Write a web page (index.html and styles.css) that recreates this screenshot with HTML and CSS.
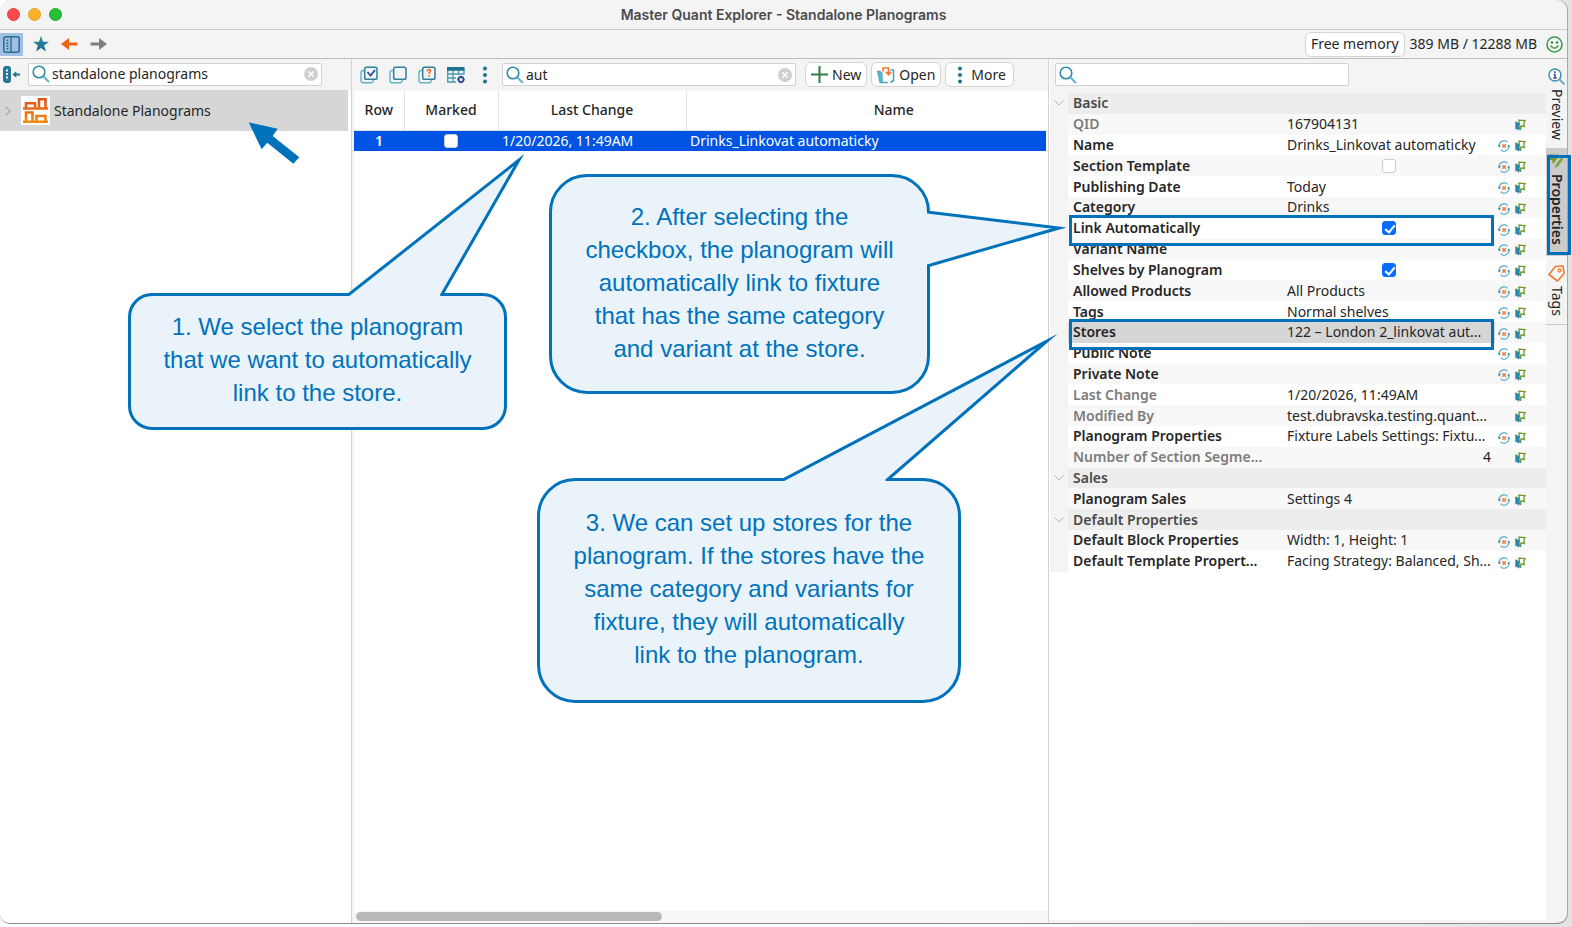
FILE: index.html
```
<!DOCTYPE html>
<html lang="en">
<head>
  <meta charset="UTF-8" />
  <meta name="viewport" content="width=device-width, initial-scale=1" />
  <title>Master Quant Explorer - Standalone Planograms</title>
  <link rel="stylesheet" href="styles.css">
</head>
<body>
  <!-- ICONS -->
  <svg class="icon-defs" aria-hidden="true">
    <defs>
      <linearGradient id="teal" x1="0" y1="0" x2="0" y2="1">
        <stop offset="0" stop-color="#2f86a3" />
        <stop offset="1" stop-color="#1d6c8c" />
      </linearGradient>
      <linearGradient id="orange" x1="0" y1="0" x2="0" y2="1">
        <stop offset="0" stop-color="#e2521b" />
        <stop offset="1" stop-color="#f28a10" />
      </linearGradient>
    </defs>
    <symbol id="i-search" viewBox="0 0 18 18">
      <circle cx="7" cy="7" r="5.8" fill="none" stroke="#2e8aa8" stroke-width="1.6" />
      <path d="M11.2 11.2 17 17" stroke="#63b3ca" stroke-width="2" />
    </symbol>
    <symbol id="i-clear" viewBox="0 0 14 14">
      <circle cx="7" cy="7" r="7" fill="#cfcfcf" />
      <path d="M4.3 4.3l5.4 5.4M9.7 4.3L4.3 9.7" stroke="#fff" stroke-width="1.4" />
    </symbol>
    <symbol id="i-dots" viewBox="0 0 6 18">
      <circle cx="3" cy="2.5" r="2" fill="#1f7391" />
      <circle cx="3" cy="9" r="2" fill="#1f7391" />
      <circle cx="3" cy="15.5" r="2" fill="#1f7391" />
    </symbol>
    <symbol id="i-sheets" viewBox="0 0 18 18">
      <path d="M5 4.5H3.2Q1 4.5 1 6.7V14.5Q1 16.8 3.2 16.8H11Q13.2 16.8 13.2 14.5V13" fill="none" stroke="#63b3ca" stroke-width="1.4" />
      <rect x="4.7" y="1.2" width="12.3" height="12" rx="1.8" fill="#f4f4f4" stroke="#2e7f9c" stroke-width="1.5" />
    </symbol>
    <symbol id="i-sync" viewBox="0 0 12 12">
      <path d="M9.6 2.4A4.9 4.9 0 0 0 1.2 6.6M2.6 9.8A4.9 4.9 0 0 0 10.9 5.6" fill="none" stroke="#6cb5cc" stroke-width="1.3" />
      <path d="M0 5l1.3 2.6L3 5.4zM12 6.8L10.7 4.4 9.2 6.6z" fill="#2e8aa8" />
      <path d="M4.3 4.2l3.6 3.6M7.9 4.2L4.3 7.8" stroke="#ef7a2e" stroke-width="1.3" />
    </symbol>
    <symbol id="i-pin" viewBox="0 0 11 12">
      <path d="M.3 2.3L4 4v4.2l2.2.3v2.8L4 10.3l-.6 1.5-1.6-2-1.5.6z" fill="#2b87a6" />
      <path d="M3.8 1.1l6.3.5-1.3 2.3.6 3.6-2.2-.7-2 2-.6-3.4z" fill="#fff" stroke="#6f9a2e" stroke-width="1.3" />
    </symbol>
    <symbol id="i-fold" viewBox="0 0 10 6">
      <path d="M.5.5L5 5 9.5.5" fill="none" stroke="#b4b4b4" />
    </symbol>
  </svg>

  <div class="window">
    <header class="title-bar">
      <div class="lights">
        <button class="light red" aria-label="Close"></button>
        <button class="light yellow" aria-label="Minimize"></button>
        <button class="light green" aria-label="Zoom"></button>
      </div>
      <h1>Master Quant Explorer - Standalone Planograms</h1>
    </header>

    <div class="main-toolbar">
      <button class="tool active" aria-label="Toggle side panel">
        <svg width="17" height="17" viewBox="0 0 17 17"><rect x=".8" y=".8" width="15.4" height="15.4" rx="2" fill="none" stroke="#23708f" stroke-width="1.5" /><path d="M8 1v15" stroke="#23708f" stroke-width="1.4" /><path d="M4.4 3.5v10" stroke="#23708f" stroke-width="1.8" stroke-dasharray="1.6 1.2" /></svg>
      </button>
      <button class="tool" aria-label="Favourites">
        <svg width="16" height="16" viewBox="0 0 16 16"><path d="M8 0l2 5.8h6l-4.9 3.6L13 15.6 8 12l-5 3.6 1.9-6.2L0 5.8h6z" fill="url(#teal)" /></svg>
      </button>
      <button class="tool" aria-label="Back">
        <svg width="17" height="12" viewBox="0 0 17 12"><path d="M0 6L8 0v4.5h8.5v3H8V12z" fill="#ea6414" /></svg>
      </button>
      <button class="tool" aria-label="Forward">
        <svg width="17" height="12" viewBox="0 0 17 12"><path d="M17 6L9 0v4.5H.5v3H9V12z" fill="#808080" /></svg>
      </button>
      <div class="memory">
        <button class="btn">Free memory</button>
        <span>389 MB / 12288 MB</span>
        <svg width="17" height="17" viewBox="0 0 17 17"><circle cx="8.5" cy="8.5" r="7.5" fill="none" stroke="#3f9a4c" stroke-width="1.6" /><circle cx="6" cy="6.5" r="1.2" fill="#2f8a45" /><circle cx="11" cy="6.5" r="1.2" fill="#2f8a45" /><path d="M4.5 9.5Q8.5 15 12.5 9.5" fill="none" stroke="#4fa04a" stroke-width="1.5" /></svg>
      </div>
    </div>

    <main class="panels">
      <!-- TREE -->
      <section class="tree-panel">
        <div class="panel-bar">
          <button class="collapse" aria-label="Collapse tree">
            <svg width="17" height="17" viewBox="0 0 17 17"><rect x=".8" y=".8" width="6.4" height="15.4" rx="2" fill="#2a7d9b" stroke="#1f6d8b" stroke-width="1.4" /><path d="M4 3.5V14" stroke="#fff" stroke-width="1.8" stroke-dasharray="2 1.5" /><path d="M9.5 8.5L13.3 5.3v2.2H17v2h-3.7v2.2z" fill="#1f7391" /></svg>
          </button>
          <label class="search">
            <svg width="18" height="18"><use href="#i-search" /></svg>
            <input type="text" aria-label="Search tree" value="standalone planograms">
            <svg width="14" height="14"><use href="#i-clear" /></svg>
          </label>
        </div>
        <a class="tree-row" href="#">
          <svg class="chevron" width="6" height="10" viewBox="0 0 6 10"><path d="M.5.5L5 5 .5 9.5" fill="none" stroke="#a8a8a8" stroke-width="1.2" /></svg>
          <span class="tree-icon">
            <svg width="25" height="25" viewBox="0 0 25 25" fill="none" stroke="url(#orange)" stroke-width="2.6"><path d="M0 10.5H25M3 10.5V5.3H12V10.5M16 10.5V1.3H22.5V10.5M0 23.7H25M3 23.7V14.5H9.5V23.7M13.5 23.7V18H22.5V23.7" /></svg>
          </span>
          Standalone Planograms
        </a>
      </section>

      <!-- LIST -->
      <section class="list-panel">
        <div class="panel-bar">
          <button class="tool" aria-label="Mark all">
            <svg width="18" height="18"><use href="#i-sheets" /><path d="M7.5 6l3 3.5L15 4" fill="none" stroke="#2c4f9c" stroke-width="1.8" /></svg>
          </button>
          <button class="tool" aria-label="Unmark all">
            <svg width="18" height="18"><use href="#i-sheets" /></svg>
          </button>
          <button class="tool" aria-label="Show marked">
            <svg width="18" height="18"><use href="#i-sheets" /><path d="M9.2 5.3Q9.5 3.5 11 3.6 13 3.9 12.3 5.7 11 6.5 11 8M11 9.3V11" fill="none" stroke="#ea7430" stroke-width="1.6" /></svg>
          </button>
          <button class="tool" aria-label="Table settings">
            <svg width="18" height="18" viewBox="0 0 18 18"><path d="M.7 2v14H9M.7 8H17M.7 12H9M6 4v12M11.5 4v5M17 3v5.5" fill="none" stroke="#4b9ab4" stroke-width="1.3" /><path d="M0 1h17.5v3.8H0z" fill="#1f7391" /><circle cx="14" cy="13.5" r="2.5" fill="#f4f4f4" stroke="#2c4f8c" stroke-width="1.8" /><path d="M14 9.8v1M14 16.2v1M10.3 13.5h1M16.7 13.5h1" stroke="#2c4f8c" stroke-width="1.6" /></svg>
          </button>
          <button class="tool" aria-label="More tools">
            <svg width="6" height="18"><use href="#i-dots" /></svg>
          </button>
          <label class="search">
            <svg width="18" height="18"><use href="#i-search" /></svg>
            <input type="text" aria-label="Search list" value="aut">
            <svg width="14" height="14"><use href="#i-clear" /></svg>
          </label>
          <div class="actions">
            <button class="btn">
              <svg width="17" height="17" viewBox="0 0 17 17"><path d="M8.5 0v17M0 8.5h17" stroke="#2f7d43" stroke-width="2" /></svg>
              New
            </button>
            <button class="btn">
              <svg width="18" height="18" viewBox="0 0 18 18"><path d="M11 16.5H3.3L.8 5.5h3M13.5 4H16.5V14.5L13.5 16.5" fill="none" stroke="#4ea4be" stroke-width="1.6" /><path d="M1.5 5.5l4 .5.5 10.5H3.5z" fill="#5fb0c8" /><path d="M6 5.5V2h5.5v6M8.8 5.8l2.7 3 2.7-3" fill="none" stroke="#ef7a2e" stroke-width="1.7" /></svg>
              Open
            </button>
            <button class="btn more">
              <svg width="6" height="18"><use href="#i-dots" /></svg>
              More
            </button>
          </div>
        </div>
        <div class="list-view">
          <table class="list">
            <thead>
              <tr><th class="c-row">Row</th><th class="c-marked">Marked</th><th class="c-change">Last Change</th><th>Name</th></tr>
            </thead>
            <tbody>
              <tr><td class="num">1</td><td class="mark"><input type="checkbox" aria-label="Marked"></td><td>1/20/2026, 11:49AM</td><td>Drinks_Linkovat automaticky</td></tr>
            </tbody>
          </table>
        </div>
        <div class="scroll-track"><div class="scroll-thumb"></div></div>
      </section>

      <!-- PROPERTIES -->
      <section class="props-panel">
        <div class="props">
          <div class="panel-bar">
            <label class="search">
              <svg width="18" height="18"><use href="#i-search" /></svg>
              <input type="text" aria-label="Search properties">
            </label>
          </div>
          <table class="props-table">
            <colgroup><col class="p-gutter"><col class="p-name"><col><col class="p-icons"></colgroup>
            <tbody>
              <tr class="group"><td><svg width="10" height="6"><use href="#i-fold" /></svg></td><th colspan="3">Basic</th></tr>
              <tr class="locked"><td></td><th>QID</th><td>167904131</td><td><svg width="11" height="12"><use href="#i-pin" /></svg></td></tr>
              <tr><td></td><th>Name</th><td>Drinks_Linkovat automaticky</td><td><svg width="12" height="12"><use href="#i-sync" /></svg><svg width="11" height="12"><use href="#i-pin" /></svg></td></tr>
              <tr><td></td><th>Section Template</th><td><input type="checkbox" aria-label="Section Template"></td><td><svg width="12" height="12"><use href="#i-sync" /></svg><svg width="11" height="12"><use href="#i-pin" /></svg></td></tr>
              <tr><td></td><th>Publishing Date</th><td>Today</td><td><svg width="12" height="12"><use href="#i-sync" /></svg><svg width="11" height="12"><use href="#i-pin" /></svg></td></tr>
              <tr><td></td><th>Category</th><td>Drinks</td><td><svg width="12" height="12"><use href="#i-sync" /></svg><svg width="11" height="12"><use href="#i-pin" /></svg></td></tr>
              <tr class="framed"><td></td><th>Link Automatically</th><td><input type="checkbox" aria-label="Link Automatically" checked></td><td><svg width="12" height="12"><use href="#i-sync" /></svg><svg width="11" height="12"><use href="#i-pin" /></svg></td></tr>
              <tr><td></td><th>Variant Name</th><td></td><td><svg width="12" height="12"><use href="#i-sync" /></svg><svg width="11" height="12"><use href="#i-pin" /></svg></td></tr>
              <tr><td></td><th>Shelves by Planogram</th><td><input type="checkbox" aria-label="Shelves by Planogram" checked></td><td><svg width="12" height="12"><use href="#i-sync" /></svg><svg width="11" height="12"><use href="#i-pin" /></svg></td></tr>
              <tr><td></td><th>Allowed Products</th><td>All Products</td><td><svg width="12" height="12"><use href="#i-sync" /></svg><svg width="11" height="12"><use href="#i-pin" /></svg></td></tr>
              <tr><td></td><th>Tags</th><td>Normal shelves</td><td><svg width="12" height="12"><use href="#i-sync" /></svg><svg width="11" height="12"><use href="#i-pin" /></svg></td></tr>
              <tr class="framed selected"><td></td><th>Stores</th><td>122 – London 2_linkovat aut...</td><td><svg width="12" height="12"><use href="#i-sync" /></svg><svg width="11" height="12"><use href="#i-pin" /></svg></td></tr>
              <tr><td></td><th>Public Note</th><td></td><td><svg width="12" height="12"><use href="#i-sync" /></svg><svg width="11" height="12"><use href="#i-pin" /></svg></td></tr>
              <tr><td></td><th>Private Note</th><td></td><td><svg width="12" height="12"><use href="#i-sync" /></svg><svg width="11" height="12"><use href="#i-pin" /></svg></td></tr>
              <tr class="locked"><td></td><th>Last Change</th><td>1/20/2026, 11:49AM</td><td><svg width="11" height="12"><use href="#i-pin" /></svg></td></tr>
              <tr class="locked"><td></td><th>Modified By</th><td>test.dubravska.testing.quant...</td><td><svg width="11" height="12"><use href="#i-pin" /></svg></td></tr>
              <tr><td></td><th>Planogram Properties</th><td>Fixture Labels Settings: Fixtu...</td><td><svg width="12" height="12"><use href="#i-sync" /></svg><svg width="11" height="12"><use href="#i-pin" /></svg></td></tr>
              <tr class="locked"><td></td><th>Number of Section Segme...</th><td class="right">4</td><td><svg width="11" height="12"><use href="#i-pin" /></svg></td></tr>
              <tr class="group"><td><svg width="10" height="6"><use href="#i-fold" /></svg></td><th colspan="3">Sales</th></tr>
              <tr><td></td><th>Planogram Sales</th><td>Settings 4</td><td><svg width="12" height="12"><use href="#i-sync" /></svg><svg width="11" height="12"><use href="#i-pin" /></svg></td></tr>
              <tr class="group"><td><svg width="10" height="6"><use href="#i-fold" /></svg></td><th colspan="3">Default Properties</th></tr>
              <tr><td></td><th>Default Block Properties</th><td>Width: 1, Height: 1</td><td><svg width="12" height="12"><use href="#i-sync" /></svg><svg width="11" height="12"><use href="#i-pin" /></svg></td></tr>
              <tr><td></td><th>Default Template Propert...</th><td>Facing Strategy: Balanced, Sh...</td><td><svg width="12" height="12"><use href="#i-sync" /></svg><svg width="11" height="12"><use href="#i-pin" /></svg></td></tr>
            </tbody>
          </table>
        </div>
        <nav class="side-tabs">
          <button class="side-tab">
            <svg width="17" height="17" viewBox="0 0 17 17"><circle cx="7" cy="7" r="6" fill="#fff" stroke="#3a93b0" stroke-width="1.5" /><path d="M11.5 11.5L16.5 16.5" stroke="#63b3ca" stroke-width="2" /><path d="M7 3.3V5M5.500 6.500H7V10M5.300 10h3.500" fill="none" stroke="#4a3c96" stroke-width="1.5" /></svg>
            Preview
          </button>
          <button class="side-tab current">
            <svg width="17" height="17" viewBox="0 0 17 17"><path d="M0 1.500h10v3L5 11l-1-4H0z" fill="#6f9a2e" /><path d="M7 12l6-8 3 2-6 8-3.500 1.500z" fill="#7fa83a" stroke="#cbcbcb" /></svg>
            Properties
          </button>
          <button class="side-tab">
            <svg width="17" height="17" viewBox="0 0 17 17"><path d="M1 9.500L7.500 1.500 15 1 16 8.500 9.500 16z" fill="#fff" stroke="#ef7a2e" stroke-width="1.6" stroke-linejoin="round" /><circle cx="11.500" cy="5.500" r="1.5" fill="none" stroke="#ef7a2e" stroke-width="1.3" /></svg>
            Tags
          </button>
        </nav>
      </section>
    </main>

    <!-- GUIDE NOTES -->
    <svg class="pointer" viewBox="0 0 156 129"><path d="M2 1L89 20 74 42 154 106 136 125 58 62 41 82z" fill="#0072bc" /></svg>
    <div class="note note-select">
      <p>1. We select the planogram that we want to automatically link to the store.</p>
      <svg class="tail" viewBox="0 0 180 145"><path d="M2 145L174 9 96 145" /></svg>
    </div>
    <div class="note note-link">
      <p>2. After selecting the checkbox, the planogram will automatically link to fixture that has the same category and variant at the store.</p>
      <svg class="tail" viewBox="0 0 145 70"><path d="M0 10L132 26 0 64" /></svg>
    </div>
    <div class="note note-stores">
      <p>3. We can set up stores for the planogram. If the stores have the same category and variants for fixture, they will automatically<br>link to the planogram.</p>
      <svg class="tail" viewBox="0 0 280 150"><path d="M0 150L266 10 105 150" /></svg>
    </div>
  </div>
</body>
</html>
```
FILE: styles.css
```
* {
  box-sizing: border-box;
  margin: 0;
  padding: 0;
}

body {
  min-height: 100vh;
  padding: 0 5px 3px 0;
  display: flex;
  background: linear-gradient(to right, #fff 60%, #e2e2e2 100%);
  color: #262626;
  font-family: "Noto Sans", "Lucida Grande", sans-serif;
  font-size: 14px;
  line-height: 20px;
}

button, input {
  font: inherit;
  color: inherit;
  border: 0;
  background: none;
}

.icon-defs {
  position: absolute;
  width: 0;
  height: 0;
}

.window {
  position: relative;
  flex: 1;
  display: flex;
  flex-direction: column;
  background: #f4f4f4;
  border-radius: 10px;
  border-bottom: 1px solid #8c8c8c;
  box-shadow: 1px 0 0 #a8a8a8;
}

/* title bar */
.title-bar {
  height: 30px;
  display: flex;
  align-items: center;
  border-bottom: 1px solid #cbcbcb;
}

.lights {
  width: 70px;
  padding-left: 7px;
  display: flex;
  gap: 8px;
}

.light {
  width: 13px;
  height: 13px;
  border-radius: 50%;
}

.red { background: #fc4a48; border: 1px solid #e0413e; }
.yellow { background: #fdb02a; border: 1px solid #e09d24; }
.green { background: #24c138; border: 1px solid #1fa42f; }

.title-bar h1 {
  flex: 1;
  padding-right: 70px;
  text-align: center;
  font-family: Inter, sans-serif;
  font-size: 14px;
  font-weight: 600;
  color: #4b4b4b;
}

/* toolbars */
.main-toolbar {
  height: 29px;
  display: flex;
  align-items: center;
  gap: 6px;
  padding-right: 4px;
  border-bottom: 1px solid #bdbdbd;
}

.tool {
  width: 23px;
  height: 23px;
  display: flex;
  align-items: center;
  justify-content: center;
}

.tool.active {
  background: #a0bfe2;
}

.memory {
  margin-left: auto;
  display: flex;
  align-items: center;
  gap: 5px;
}

.memory svg {
  margin-left: 4px;
}

.btn {
  height: 25px;
  padding: 0 5px;
  display: flex;
  align-items: center;
  gap: 4px;
  background: #fff;
  border: 1px solid #d4d4d4;
  border-radius: 6px;
}

.btn.more {
  gap: 8px;
  padding: 0 7px 0 11px;
}

.panels {
  flex: 1;
  display: grid;
  grid-template-columns: 352px 1fr 518px;
}

.panel-bar {
  height: 32px;
  padding-bottom: 1px;
  display: flex;
  align-items: center;
  background: #f4f4f4;
}

.search {
  width: 294px;
  height: 23px;
  padding: 0 3px;
  display: flex;
  align-items: center;
  gap: 2px;
  background: #fff;
  border: 1px solid #d2d2d2;
  border-radius: 2px;
}

.search input {
  flex: 1;
  min-width: 0;
  outline: 0;
}

/* tree */
.tree-panel {
  background: #fff;
  border-right: 1px solid #d4d4d4;
  border-radius: 0 0 0 10px;
}

.tree-panel .panel-bar {
  height: 31px;
  gap: 8px;
  padding-left: 3px;
}

.collapse {
  display: flex;
}

.tree-row {
  height: 41px;
  margin-right: 3px;
  padding-left: 5px;
  display: flex;
  align-items: center;
  gap: 4px;
  background: #d6d6d6;
  color: inherit;
  text-decoration: none;
}

.tree-icon {
  width: 29px;
  height: 29px;
  margin-left: 6px;
  display: flex;
  align-items: center;
  justify-content: center;
  background: #fff;
}

/* list */
.list-panel {
  min-width: 0;
  display: flex;
  flex-direction: column;
  background: #fff;
  border-left: 2px solid #f4f4f4;
  border-right: 1px solid #d4d4d4;
}

.list-panel .panel-bar {
  padding-left: 3px;
  gap: 6px;
}

.actions {
  display: flex;
  gap: 4px;
  margin-left: 3px;
}

.list-view {
  margin-right: 2px;
  overflow: hidden;
}

.list {
  width: calc(100% + 56px);
  table-layout: fixed;
  border-collapse: collapse;
}

.list th {
  height: 39px;
  font-weight: 500;
  border-right: 1px solid #e2e2e2;
  border-bottom: 1px solid #e2e2e2;
}

.c-row { width: 50px; }
.c-marked { width: 94px; }
.c-change { width: 188px; }

.list td {
  height: 21px;
  padding: 0 4px;
  background: #0054e3;
  color: #fff;
}

.list .num,
.list .mark {
  text-align: center;
}

.list .num {
  font-weight: 600;
}

input[type="checkbox"] {
  appearance: none;
  position: relative;
  width: 14px;
  height: 14px;
  display: block;
  margin: 0 auto;
  background: #fff;
  border: 1px solid #cdcdcd;
  border-radius: 3px;
}

input[type="checkbox"]:checked {
  background: #0a6cff;
  border-color: #0a6cff;
}

input[type="checkbox"]:checked::after {
  content: '';
  position: absolute;
  left: 4px;
  top: 1px;
  width: 4px;
  height: 8px;
  border: solid #fff;
  border-width: 0 2px 2px 0;
  transform: rotate(40deg);
}

.scroll-track {
  margin-top: auto;
  height: 12px;
  padding: 1px 2px;
  background: #f8f8f8;
}

.scroll-thumb {
  width: 306px;
  height: 9px;
  border-radius: 5px;
  background: #b9b9b9;
}

/* properties */
.props-panel {
  display: flex;
  padding-bottom: 3px;
}

.props {
  flex: 1;
  padding-left: 1px;
  background: #fff;
}

.props .panel-bar {
  height: 34px;
  padding: 0 0 3px 5px;
}

.props-table {
  width: 100%;
  height: 479px;
  table-layout: fixed;
  border-collapse: collapse;
}

.p-gutter { width: 18px; }
.p-name { width: 210px; }
.p-icons { width: 51px; }

.props-table tr:nth-child(even) { background: #f8f8f8; }
.props-table .group { background: #ededed; }

.props-table td,
.props-table th {
  text-align: left;
  white-space: nowrap;
  overflow: hidden;
}

.props-table th {
  padding-left: 5px;
  font-weight: 600;
}

.props-table td:nth-child(3) {
  padding: 0 4px 0 9px;
}

.props-table td:first-child {
  background: #f4f4f4;
}

.props-table td:first-child svg {
  display: block;
  margin: 0 auto;
}

.props-table td:nth-child(4) {
  padding-right: 20px;
  text-align: right;
}

.props-table td:nth-child(4) svg {
  display: inline-block;
  vertical-align: middle;
}

.props-table td svg + svg {
  margin-left: 5px;
}

.props-table .group th { color: #4a4a4a; }
.props-table .locked th { color: #7c7c7c; }
.props-table td.right { text-align: right; }

.selected th,
.selected td:nth-child(3) {
  background: #d6d6d6;
}

.framed {
  position: relative;
}

.framed td:first-child::after {
  content: '';
  position: absolute;
  top: -3px;
  bottom: -7px;
  left: 19px;
  right: 52px;
  border: 3px solid #0072bc;
}

/* side tabs */
.side-tabs {
  width: 21px;
  display: flex;
  flex-direction: column;
}

.side-tab {
  width: 21px;
  padding: 9px 0 8px;
  display: flex;
  align-items: center;
  gap: 4px;
  writing-mode: vertical-rl;
  border-bottom: 1px solid #cbcbcb;
}

.side-tab svg {
  flex: none;
}

.side-tab.current {
  position: relative;
  padding: 4px 0 10px;
  background: #cbcbcb;
  font-weight: 600;
}

.side-tab.current::after {
  content: '';
  position: absolute;
  inset: 6px -4px 0 1px;
  border: 3px solid #0072bc;
}

/* notes */
.pointer {
  position: absolute;
  left: 248px;
  top: 122px;
  width: 52px;
  height: 43px;
}

.note {
  position: absolute;
  padding: 0 24px 4px;
  display: flex;
  align-items: center;
  justify-content: center;
  background: #eaf3f9;
  border: 3px solid #0072bc;
  color: #0072bc;
  font-family: "Liberation Sans", Arial, sans-serif;
  font-size: 24px;
  line-height: 33px;
  text-align: center;
}

.tail {
  position: absolute;
  fill: #eaf3f9;
  stroke: #0072bc;
  stroke-width: 3;
  stroke-miterlimit: 12;
}

.note-select {
  left: 128px;
  top: 293px;
  width: 379px;
  height: 137px;
  border-radius: 24px;
}

.note-select .tail {
  left: 214px;
  bottom: 131px;
  width: 180px;
  height: 145px;
}

.note-link {
  left: 549px;
  top: 174px;
  width: 381px;
  height: 220px;
  border-radius: 38px;
}

.note-link .tail {
  left: 375px;
  top: 25px;
  width: 145px;
  height: 70px;
}

.note-stores {
  left: 537px;
  top: 478px;
  width: 424px;
  height: 225px;
  border-radius: 38px;
}

.note-stores .tail {
  left: 241px;
  bottom: 219px;
  width: 280px;
  height: 150px;
}
```
